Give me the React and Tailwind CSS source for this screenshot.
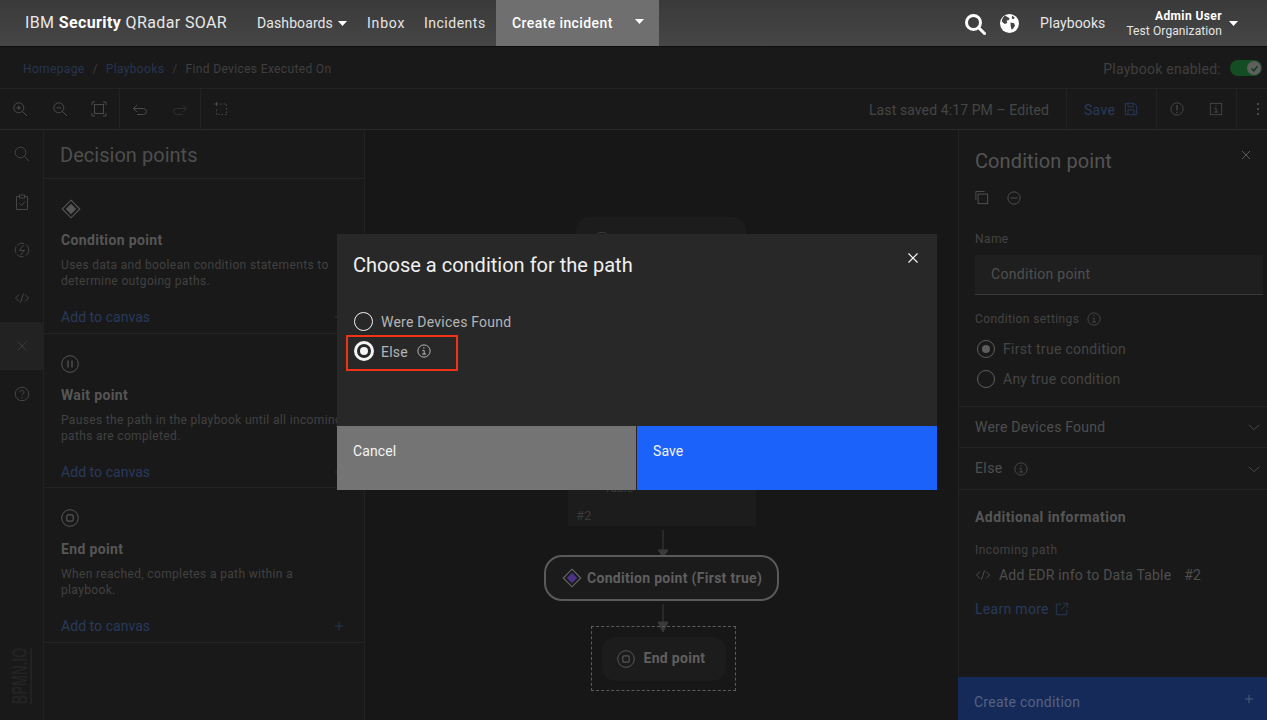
import React from "react";

const S = ({ size = 16, className = "", children, sw = 1 }) => (
  <svg width={size} height={size} viewBox="0 0 16 16" fill="none" stroke="currentColor" strokeWidth={sw} className={className}>
    {children}
  </svg>
);
const Caret = ({ className = "" }) => (
  <svg width="9" height="5" viewBox="0 0 9 5" className={className}><path d="M0 0h9L4.5 5z" fill="currentColor" /></svg>
);
const Info = ({ size = 14, className = "" }) => (
  <S size={size} className={className}>
    <circle cx="8" cy="8" r="7" />
    <path d="M6.2 7.3H8.2v4.2M5.8 11.5h4.6M7.9 3.6v1.6" />
  </S>
);
const Code = ({ className = "" }) => (
  <S size={16} className={className}><path d="M5 4.5 1.5 8 5 11.5M11 4.5 14.5 8 11 11.5M9.5 3.5l-3 9" /></S>
);
const Diamond = ({ size = 20, fill, className = "" }) => (
  <svg width={size} height={size} viewBox="0 0 20 20" className={className}>
    <path d="M10 1.2 18.8 10 10 18.8 1.2 10z" fill="none" stroke="currentColor" strokeWidth="1.1" />
    <path d="M10 4.8 15.2 10 10 15.2 4.8 10z" fill={fill || "currentColor"} />
  </svg>
);
const StopC = ({ className = "" }) => (
  <svg width="18" height="18" viewBox="0 0 18 18" fill="none" stroke="currentColor" className={className}>
    <circle cx="9" cy="9" r="8.3" />
    <rect x="5.8" y="5.8" width="6.4" height="6.4" rx="1.2" strokeWidth="1.2" />
  </svg>
);
const PauseC = ({ className = "" }) => (
  <svg width="18" height="18" viewBox="0 0 18 18" fill="none" stroke="currentColor" className={className}>
    <circle cx="9" cy="9" r="8.3" />
    <path d="M7 5.6v6.8M11 5.6v6.8" strokeWidth="1.3" />
  </svg>
);
const Plus = ({ className = "" }) => (
  <S size={12} className={className} sw={1.2}><path d="M8 2.5v11M2.5 8h11" /></S>
);
const Chevron = ({ className = "" }) => (
  <S size={14} className={className}><path d="M2 5.5 8 11l6-5.5" /></S>
);
const Radio = ({ checked, className = "" }) => (
  <span className={`flex items-center justify-center w-[18px] h-[18px] rounded-full border border-[#5d5d5d] ${className}`}>
    {checked && <span className="w-2 h-2 rounded-full bg-[#5d5d5d]" />}
  </span>
);

function Point({ icon, title, children }) {
  return (
    <div className="pl-[17px] pr-[19px] border-b border-[#232323] flex flex-col h-[154.5px] pt-[21px]">
      <div className="text-[#565656] h-[18px] flex items-center">{icon}</div>
      <div className="mt-[13px] text-[14px] leading-[18px] font-bold text-[#565656] tracking-[0.35px]">{title}</div>
      <div className="mt-[8px] text-[12px] leading-[16px] text-[#414141] tracking-[0.35px] whitespace-nowrap">{children}</div>
      <div className="mt-[19px] flex items-center justify-between text-[14px] leading-[18px] text-[#29395c] tracking-[0.05px]">
        <span>Add to canvas</span>
        <Plus className="text-[#29395c]" />
      </div>
    </div>
  );
}

function RailIcon({ children, active }) {
  return (
    <div className={`h-[48px] flex items-center justify-center text-[#454545] ${active ? "bg-[#222222]" : ""}`}>{children}</div>
  );
}
const Cell = ({ children }) => <div className="w-[40px] flex items-center justify-center">{children}</div>;

export default function App() {
  return (
    <div className="relative w-[1267px] h-[720px] overflow-hidden bg-[#191919] font-['Roboto','Liberation_Sans',sans-serif] flex flex-col">
      {/* Header */}
      <header className="h-[47px] shrink-0 flex items-stretch bg-gradient-to-b from-[#3a3a3a] to-[#464646] border-b border-[#0d0d0d] text-[#f0f0f0]">
        <div className="ml-[25px] w-[232px] pt-[13px] text-[16px] leading-[20px] tracking-[0.38px] text-[#e8e8e8] whitespace-nowrap">
          IBM <span className="font-bold text-white">Security</span> QRadar SOAR
        </div>
        <div className="flex items-center gap-[5px] text-[14px] tracking-[0.1px] text-[#e6e6e6] w-[110px]">Dashboards<Caret className="text-white" /></div>
        <div className="flex items-center text-[14px] tracking-[0.8px] text-[#e6e6e6] w-[57px]">Inbox</div>
        <div className="flex items-center text-[14px] tracking-[0.5px] text-[#e6e6e6] w-[72px]">Incidents</div>
        <div className="w-[163px] bg-[#6f6f6f] flex items-center justify-between pl-[16px] pr-[15px] text-[14px] font-medium tracking-[0.4px] text-white">
          <span>Create incident</span><Caret className="text-white -mt-[4px]" />
        </div>
        <div className="ml-auto flex items-center">
          <svg width="22" height="22" viewBox="0 0 22 22" fill="none" stroke="white" strokeWidth="3" className="mr-[14px] mt-[2px] -ml-[1px]">
            <circle cx="9.5" cy="9.5" r="7" /><path d="M14.5 14.5 20.5 20.5" strokeLinecap="round" />
          </svg>
          <svg width="19" height="19" viewBox="0 0 19 19" className="mr-[21px]">
            <circle cx="9.5" cy="9.5" r="9.5" fill="white" />
            <path d="M5 1.6 9.5 4.2 9 6 6.7 6.5 7.2 9 4.6 10 1.8 7.5C2.2 5 3.2 3 5 1.6ZM10.5 8.5l3.6.8.9 2.5-2 3-1.5.8-.8-3.4zM12 1.5l2.6 2-.8 1.8-2-.8z" fill="#434343" />
          </svg>
          <span className="text-[14px] tracking-[0.1px] text-[#e6e6e6] mr-[21px]">Playbooks</span>
          <div className="flex flex-col items-end mr-[7px] pt-[2px]">
            <span className="text-[12px] leading-[15px] font-bold tracking-[0.4px] text-white">Admin User</span>
            <span className="text-[12px] leading-[15px] tracking-[0.1px] text-[#e6e6e6]">Test Organization</span>
          </div>
          <Caret className="text-white mr-[29px]" />
        </div>
      </header>

      {/* Breadcrumb bar */}
      <div className="h-[42px] shrink-0 flex items-center border-b border-[#222222] pl-[23px] pr-[5px] text-[12px] tracking-[0.35px]">
        <span className="text-[#273452] pt-[3px]">Homepage</span>
        <span className="text-[#3b3b3b] mx-[8px] pt-[3px]">/</span>
        <span className="text-[#273452] pt-[3px]">Playbooks</span>
        <span className="text-[#3b3b3b] mx-[8px] pt-[3px]">/</span>
        <span className="text-[#3f3f3f] pt-[3px]">Find Devices Executed On</span>
        <span className="ml-auto text-[14px] text-[#3f3f3f] tracking-[0.25px] mr-[9px] pt-[3px]">Playbook enabled:</span>
        <span className="relative mt-[1px] w-[32px] h-[16px] rounded-full bg-[#144d24] flex items-center justify-end pr-[1px]">
          <span className="w-[14px] h-[14px] rounded-full bg-[#5e5e5e] flex items-center justify-center">
            <svg width="9" height="9" viewBox="0 0 9 9" fill="none" stroke="#1a3a20" strokeWidth="1.5"><path d="M1.5 4.5 3.7 6.8 7.5 2.2" /></svg>
          </span>
        </span>
      </div>

      {/* Toolbar */}
      <div className="h-[41px] shrink-0 flex items-stretch border-b border-[#2b2b2b] text-[#4a4a4a]">
        <div className="flex w-[120px] border-r border-[#222222]">
          <Cell><S size={16}><circle cx="6.8" cy="6.8" r="5" /><path d="m10.5 10.5 4.5 4.5M6.8 4.5v4.6M4.5 6.8h4.6" /></S></Cell>
          <Cell><S size={16}><circle cx="6.8" cy="6.8" r="5" /><path d="m10.5 10.5 4.5 4.5M4.5 6.8h4.6" /></S></Cell>
          <Cell><S size={16}><rect x="3.5" y="3.5" width="9" height="9" /><path d="M1 4V1h3M12 1h3v3M15 12v3h-3M4 15H1v-3" /></S></Cell>
        </div>
        <div className="flex w-[81px] border-r border-[#222222]">
          <Cell><S size={16}><path d="M1.5 7.5h10a3 3 0 0 1 0 6H5M5 4 1.5 7.5 5 11" /></S></Cell>
          <Cell><S size={16} className="text-[#2e2e2e]"><path d="M14.5 7.5h-10a3 3 0 0 0 0 6H11M11 4l3.5 3.5L11 11" /></S></Cell>
        </div>
        <Cell>
          <S size={16}>
            <path d="M3.5 1v4M1.5 3h4" />
            <path d="M7 3h1.5M10.5 3H12M13.5 3.5V5M13.5 7v1.5M13.5 10.5V12M13.5 13.5H12M10 13.5H8.5M6.5 13.5H5M3.5 13.5V12M3.5 10V8.5" />
          </S>
        </Cell>
        <div className="ml-auto flex items-stretch">
          <div className="flex items-center text-[14px] tracking-[0.1px] text-[#464646] pl-[2px] pr-[17px] pt-[2px] border-r border-[#222222]">Last saved 4:17 PM – Edited</div>
          <div className="w-[90px] flex items-center pl-[17px] gap-[9px] border-r border-[#222222] text-[#29395c] text-[14px] tracking-[0.3px]">
            <span className="pt-[2px]">Save</span>
            <S size={14} sw={1.1}><path d="M1.5 1.5h10l3 3v10h-13zM4.5 1.5v4h6v-4M4.5 14.5v-5.5h7v5.5" /></S>
          </div>
          <div className="w-[80px] flex border-r border-[#222222]">
            <Cell><S size={14}><circle cx="8" cy="8" r="7" /><path d="M8 3.5v6M8 11v1.5" strokeWidth="1.5" /></S></Cell>
            <Cell><S size={14}><rect x="1.5" y="1.5" width="13" height="13" /><path d="M6.2 7.3H8.2v4.2M5.8 11.5h4.6M7.9 3.6v1.6" /></S></Cell>
          </div>
          <div className="w-[30px] flex items-center justify-end pr-[8px]">
            <span className="flex flex-col gap-[3px]"><i className="w-[2px] h-[2px] bg-[#4a4a4a]" /><i className="w-[2px] h-[2px] bg-[#4a4a4a]" /><i className="w-[2px] h-[2px] bg-[#4a4a4a]" /></span>
          </div>
        </div>
      </div>

      {/* Body */}
      <div className="flex-1 min-h-0 flex">
        {/* Rail */}
        <div className="relative w-[44px] shrink-0 border-r border-[#222222]">
          <RailIcon><S size={16}><circle cx="6.5" cy="6.5" r="5.3" /><path d="m10.5 10.5 4.5 4.5" /></S></RailIcon>
          <RailIcon><S size={16}><path d="M5.5 2.5h-3v13h11v-13h-3" /><rect x="5.5" y="1" width="5" height="3" /><path d="m5.5 9.5 2 2 3.5-4" /></S></RailIcon>
          <RailIcon><S size={16}><circle cx="8" cy="8" r="6.8" strokeDasharray="7 2" /><path d="M9.5 3 5.5 8.5h5L6.5 13" /></S></RailIcon>
          <RailIcon><Code /></RailIcon>
          <RailIcon active><S size={12}><path d="m2 2 12 12M14 2 2 14" /></S></RailIcon>
          <RailIcon>
            <S size={16}><circle cx="8" cy="8" r="6.8" /><path d="M6 6.3a2 2 0 1 1 2.9 1.8c-.6.3-.9.7-.9 1.4M8 11v1.3" /></S>
          </RailIcon>
          <div className="absolute left-[10px] bottom-[17px] w-[22px] h-[54px] flex items-center justify-center">
            <span className="[transform:rotate(-90deg)_scaleX(0.6)] whitespace-nowrap text-[22px] leading-[20px] font-bold text-[#232323] border-b-2 border-[#232323] font-['Liberation_Sans',sans-serif]">BPMN.IO</span>
          </div>
        </div>

        {/* Left panel */}
        <div className="w-[321px] shrink-0 border-r border-[#222222]">
          <div className="h-[49px] pl-[16px] pt-[2px] flex items-center border-b border-[#232323] text-[20px] text-[#4e4e4e] tracking-[0.03px]">Decision points</div>
          <Point icon={<Diamond />} title="Condition point">
            Uses data and boolean condition statements to<br />determine outgoing paths.
          </Point>
          <Point icon={<PauseC />} title="Wait point">
            Pauses the path in the playbook until all incoming<br />paths are completed.
          </Point>
          <Point icon={<StopC />} title="End point">
            When reached, completes a path within a<br />playbook.
          </Point>
        </div>

        {/* Canvas */}
        <div className="relative flex-1 bg-[#171717]">
          <div className="absolute left-[211px] top-[87px] w-[170px] h-[40px] rounded-[14px] bg-[#1c1c1c] pl-[18px] pt-[12px] text-[#3c3c3c]">
            <svg width="16" height="12" viewBox="0 0 16 12" fill="none" stroke="currentColor"><path d="M2 6a8 8 0 0 1 12 0M4.5 9a4.5 4.5 0 0 1 7 0" /></svg>
          </div>
          <div className="absolute left-[203px] top-[330px] w-[188px] h-[66px] bg-[#1c1c1c] pl-[36px] text-[12px] text-[#3a3a3a] leading-[16px]">
            <div className="pt-[20px]">Table</div>
            <div className="-ml-[28px] pt-[12px] text-[13px]">#2</div>
          </div>
          <svg width="12" height="30" viewBox="0 0 12 30" className="absolute left-[292px] top-[400px] text-[#3a3a3a]"><path d="M6 0v22M1 20h10L6 27z" fill="currentColor" stroke="currentColor" /></svg>
          <div className="absolute left-[179px] top-[425px] w-[235px] h-[46px] rounded-[18px] border-2 border-[#5a5a5a] bg-[#1b1b1b] flex items-center pl-[16px] gap-[5px]">
            <Diamond fill="#4a3285" size={20} className="text-[#686868]" />
            <span className="text-[14px] font-bold text-[#5f5f5f] tracking-[0.3px] whitespace-nowrap">Condition point (First true)</span>
          </div>
          <svg width="12" height="30" viewBox="0 0 12 30" className="absolute left-[292px] top-[474px] text-[#3a3a3a]"><path d="M6 0v22M1 18h10L6 28z" fill="currentColor" stroke="currentColor" /></svg>
          <div className="absolute left-[226px] top-[496px] w-[145px] h-[65px] border border-dashed border-[#5c5c5c] flex items-center justify-center">
            <div className="w-[124px] h-[44px] rounded-[14px] bg-[#1c1c1c] flex items-center pl-[15px] gap-[9px]">
              <StopC className="text-[#565656]" />
              <span className="text-[14px] font-bold text-[#5f5f5f] tracking-[0.3px]">End point</span>
            </div>
          </div>
        </div>

        {/* Right panel */}
        <div className="w-[309px] shrink-0 border-l border-[#222222] flex flex-col relative">
          <div className="flex-1 min-h-0">
            <div className="relative pl-[16px] pr-[4px] pt-[18px] h-[277px] border-b border-[#232323]">
              <svg width="10" height="10" viewBox="0 0 10 10" stroke="#5a5a5a" className="absolute right-[16px] top-[20px]"><path d="m1 1 8 8M9 1 1 9" /></svg>
              <div className="text-[20px] leading-[26px] text-[#545454] tracking-[0.1px]">Condition point</div>
              <div className="mt-[17px] flex items-center gap-[18px] text-[#565656]">
                <S size={14}><path d="M1 10.5V.5h10" /><rect x="3.5" y="3.5" width="11" height="11" /></S>
                <S size={14}><circle cx="8" cy="8" r="7" /><path d="M3.8 8h8.4" /></S>
              </div>
              <div className="mt-[26px] text-[12px] leading-[16px] text-[#444444] tracking-[0.4px]">Name</div>
              <div className="mt-[8px] h-[40px] bg-[#1f1f1f] border-b border-[#3a3a3a] pl-[16px] flex items-center text-[14px] text-[#505050] tracking-[0.3px]">Condition point</div>
              <div className="mt-[16px] flex items-center gap-[8px] text-[12px] leading-[16px] text-[#444444] tracking-[0.4px]">
                Condition settings <Info className="text-[#4a4a4a]" />
              </div>
              <div className="mt-[13px] ml-[2px] flex items-center gap-[8px] text-[14px] leading-[18px] text-[#454545] tracking-[0.3px]"><Radio checked />First true condition</div>
              <div className="mt-[12px] ml-[2px] flex items-center gap-[8px] text-[14px] leading-[18px] text-[#454545] tracking-[0.25px]"><Radio />Any true condition</div>
            </div>
            <div className="h-[41px] pl-[16px] pr-[6px] flex items-center justify-between border-b border-[#232323] text-[14px] text-[#4e4e4e] tracking-[0.23px]">
              Were Devices Found <Chevron className="text-[#4e4e4e]" />
            </div>
            <div className="h-[42px] pl-[16px] pr-[6px] flex items-center justify-between border-b border-[#232323] text-[14px] text-[#4e4e4e] tracking-[0.4px]">
              <span className="flex items-center gap-[11px]">Else <Info className="text-[#4e4e4e]" /></span> <Chevron className="text-[#4e4e4e]" />
            </div>
            <div className="pl-[16px] pt-[18px]">
              <div className="text-[14px] leading-[18px] font-bold text-[#565656] tracking-[0.45px]">Additional information</div>
              <div className="mt-[16px] text-[12px] leading-[16px] text-[#414141] tracking-[0.45px]">Incoming path</div>
              <div className="mt-[8px] flex items-center text-[14px] leading-[18px] text-[#4e4e4e] tracking-[0.2px]">
                <Code className="text-[#4e4e4e] mr-[8px]" />Add EDR info to Data Table<span className="ml-[13px]">#2</span>
              </div>
              <div className="mt-[16px] flex items-center gap-[6px] text-[14px] leading-[18px] text-[#29395c] tracking-[0.3px]">
                Learn more
                <S size={14}><path d="M7 2.5H1.5v12h12V9M9.5 1.5h5v5M14.5 1.5l-7 7" /></S>
              </div>
            </div>
          </div>
          <div className="h-[43px] bg-[#162a59] flex items-start justify-between pl-[16px] pr-[12px] pt-[15px] -ml-[1px] text-[14px] leading-[20px] text-[#55627f] tracking-[0.25px]">
            Create condition <Plus className="text-[#55627f] mt-[1px]" />
          </div>
        </div>
      </div>

      {/* Modal */}
      <div className="absolute left-[337px] top-[234px] w-[600px] h-[256px] bg-[#282828] flex flex-col">
        <div className="relative flex-1">
          <svg width="10" height="10" viewBox="0 0 10 10" stroke="#f4f4f4" strokeWidth="1.2" className="absolute right-[19px] top-[19px]"><path d="m.5.5 9 9M9.5.5l-9 9" /></svg>
          <div className="pl-[16px] pt-[18px] text-[20px] leading-[26px] text-[#f0f0f0] tracking-[0.01px]">Choose a condition for the path</div>
          <div className="pl-[17px] mt-[28px] flex flex-col">
            <div className="flex items-center gap-[8px] h-[30px] text-[14px] text-[#b5b5b5] tracking-[0.23px]">
              <span className="w-[19px] h-[19px] rounded-full border-[1.5px] border-[#f4f4f4]" />
              <span className="pt-[3px]">Were Devices Found</span>
            </div>
            <div className="relative flex items-center gap-[7px] h-[30px] text-[14px] text-[#b5b5b5] tracking-[0.2px]">
              <span className="absolute -left-[8px] top-[-1px] w-[112px] h-[36px] border-2 border-[#f03316]" />
              <span className="flex items-center justify-center w-[20px] h-[20px] rounded-full border-[3px] border-[#f4f4f4]">
                <span className="w-[8px] h-[8px] rounded-full bg-[#f4f4f4]" />
              </span>
              <span className="pt-[3px]">Else</span>
              <Info className="ml-[2px] text-[#c6c6c6]" />
            </div>
          </div>
        </div>
        <div className="h-[64px] flex text-[14px] text-[#f4f4f4] tracking-[0.1px]">
          <div className="w-[299px] bg-[#747474] pl-[16px] pt-[15px]">Cancel</div>
          <div className="w-[1px] bg-[#262626]" />
          <div className="flex-1 bg-[#1b62fb] pl-[16px] pt-[15px]">Save</div>
        </div>
      </div>
    </div>
  );
}
